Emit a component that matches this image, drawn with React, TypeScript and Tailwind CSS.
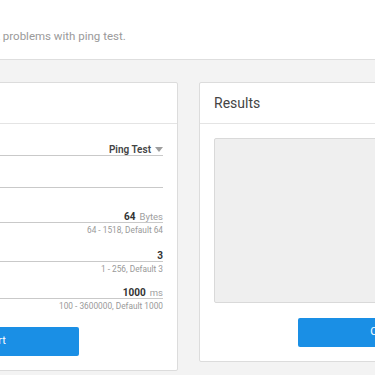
import React from "react";

function Field({ label, value, unit, hint }: { label: string; value?: string; unit?: string; hint?: string }) {
  return (
    <div>
      <div className="h-[16px] flex items-end justify-between border-b border-[#c9c9c9] text-[10px] leading-[11px]">
        <span className="text-[#777]">{label}</span>
        <span className="flex items-end gap-[4px]">
          {value && <span className="font-bold text-[#333]">{value}</span>}
          {unit && <span className="text-[#a0a0a0] text-[9.5px]">{unit}</span>}
        </span>
      </div>
      {hint && <div className="text-right text-[8.3px] leading-[10px] text-[#999] mt-[2px]">{hint}</div>}
    </div>
  );
}

export default function App() {
  return (
    <div className="w-[375px] h-[375px] overflow-hidden bg-[#f3f3f3]" style={{ fontFamily: "Roboto, 'Noto Sans', sans-serif" }}>
      <div className="h-[60px] bg-white border-b border-[#dedede] flex items-center">
        <p className="ml-[-92px] mt-[14px] whitespace-nowrap text-[11.5px] text-[#9a9a9a]">Diagnose network problems with ping test.</p>
      </div>
      <div className="flex items-start gap-[21px] ml-[-190px] mt-[22px]">
        <div className="w-[368px] shrink-0 bg-white border border-[#dcdcdc] rounded-[2px]">
          <div className="h-[41px] border-b border-[#e4e4e4] flex items-center px-[14px]">
            <span className="text-[14px] text-[#444]">Ping</span>
          </div>
          <div className="px-[14px] pt-[16px] pb-[14px]">
            <div className="h-[16px] flex items-end justify-between border-b border-[#c9c9c9] text-[10px] leading-[11px]">
              <span className="text-[#777]">Mode</span>
              <span className="flex items-center gap-[4px] font-semibold text-[#444]">
                Ping Test
                <svg width="8" height="5" viewBox="0 0 8 5"><path d="M0 0 L8 0 L4 5 Z" fill="#9e9e9e" /></svg>
              </span>
            </div>
            <div className="mt-[16px]">
              <div className="h-[16px] flex items-end border-b border-[#c9c9c9] text-[10px] leading-[11px] text-[#777]">Host</div>
            </div>
            <div className="mt-[19px]">
              <Field label="Size" value="64" unit="Bytes" hint="64 - 1518, Default 64" />
            </div>
            <div className="mt-[11px]">
              <Field label="Count" value="3" hint="1 - 256, Default 3" />
            </div>
            <div className="mt-[9px]">
              <Field label="Interval" value="1000" unit="ms" hint="100 - 3600000, Default 1000" />
            </div>
            <div className="flex justify-center mt-[16px]">
              <button className="w-[170px] h-[29px] rounded-[2px] bg-[#1a8fe5] text-white text-[11px]">Start</button>
            </div>
          </div>
        </div>
        <div className="w-[368px] shrink-0 bg-white border border-[#dcdcdc] rounded-[2px]">
          <div className="h-[41px] border-b border-[#e4e4e4] flex items-center px-[14px]">
            <span className="text-[14px] text-[#444]">Results</span>
          </div>
          <div className="px-[14px] pt-[14px] pb-[14px]">
            <div className="h-[165px] bg-[#efefef] border border-[#d9d9d9] rounded-[2px]" />
            <div className="flex justify-center mt-[15px]">
              <button className="w-[170px] h-[29px] rounded-[2px] bg-[#1a8fe5] text-white text-[11px]">Clear</button>
            </div>
          </div>
        </div>
      </div>
    </div>
  );
}
